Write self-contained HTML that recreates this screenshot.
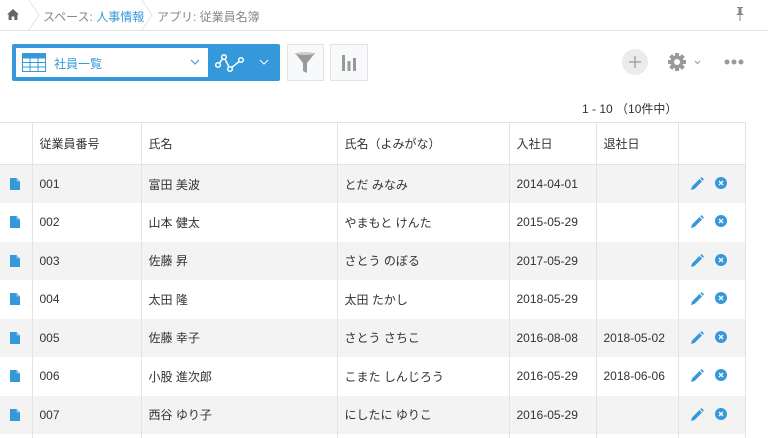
<!DOCTYPE html>
<html style="overflow:hidden;height:438px"><head><meta charset="utf-8"><style>
*{margin:0;padding:0;box-sizing:border-box}
body{width:768px;height:438px;overflow:hidden;background:#fff;font-family:"Liberation Sans","Noto Sans CJK JP",sans-serif;color:#333;font-size:12px;position:relative}
.a{position:absolute}
.bc{top:0;left:0;width:768px;height:31px;border-bottom:1px solid #e3e3e3;color:#888;font-size:12px}
.sep{position:absolute;top:0;width:12px;height:30px}
table{position:absolute;top:122px;left:0;border-collapse:collapse;font-size:12px}
td{border-left:1px solid #e3e3e3;height:38.5px;padding-left:7px;color:#333;white-space:nowrap}
tr.h td{height:42px;border-top:1px solid #e3e3e3;border-bottom:1px solid #e3e3e3}
tr.g td{background:#f3f3f3}
td.i{border-left:none;padding-left:10px}
td.l{border-right:1px solid #e3e3e3}
.vl{position:absolute;top:433px;height:5px;width:1px;background:#e3e3e3}
</style></head><body>
<div class="a bc">
<svg class="a" style="left:7px;top:9px" width="12" height="11" viewBox="0 0 12 11"><path d="M6 0L0 5.5h1.6V11h3V7.5h2.8V11h3V5.5H12z" fill="#666"/></svg>
<svg class="sep" style="left:28px" viewBox="0 0 12 30"><path d="M1 0L11 15L1 30" fill="none" stroke="#e3e3e3"/></svg>
<div class="a" style="left:43px;top:8px">スペース: <span style="color:#3498db">人事情報</span></div>
<svg class="sep" style="left:141px" viewBox="0 0 12 30"><path d="M1 0L11 15L1 30" fill="none" stroke="#e3e3e3"/></svg>
<div class="a" style="left:157px;top:8px">アプリ: 従業員名簿</div>
<svg class="a" style="left:736px;top:7px" width="8" height="14" viewBox="0 0 8 14"><path d="M1 0h6v1H5.5v5L8 8H4.5v6h-1V8H0l2.5-2V1H1z" fill="#888"/></svg>
</div>
<div class="a" style="left:12px;top:44px;width:268px;height:37px;background:#3498db;border-radius:2px"></div>
<div class="a" style="left:16px;top:48px;width:192px;height:29px;background:#fff"></div>
<svg class="a" style="left:22px;top:53px" width="24" height="19" viewBox="0 0 24 19"><rect x="0.5" y="0.5" width="23" height="18" fill="#fff" stroke="#3498db"/><path d="M0 5h24M0 9.5h24M0 14h24M8 5v14M16 5v14" stroke="#3498db"/><rect x="1" y="1" width="22" height="4" fill="#3498db"/></svg>
<div class="a" style="left:54px;top:55px;color:#3498db;font-size:12px">社員一覧</div>
<svg class="a" style="left:190px;top:59px" width="10" height="6" viewBox="0 0 10 6"><path d="M1 1l4 4 4-4" fill="none" stroke="#3498db"/></svg>
<svg class="a" style="left:215px;top:52px" width="32" height="22" viewBox="0 0 32 22"><path d="M3 13L9 5L15 17L26 8" fill="none" stroke="#fff" stroke-width="1.5"/><g fill="#3498db" stroke="#fff" stroke-width="1.5"><circle cx="3" cy="13" r="2.3"/><circle cx="9" cy="5" r="2.3"/><circle cx="15" cy="17" r="2.3"/><circle cx="26" cy="8" r="2.3"/></g></svg>
<svg class="a" style="left:259px;top:59px" width="10" height="6" viewBox="0 0 10 6"><path d="M1 1l4 4 4-4" fill="none" stroke="#fff"/></svg>
<div class="a" style="left:287px;top:44px;width:37px;height:37px;background:#f7f9fa;border:1px solid #e3e3e3"></div>
<svg class="a" style="left:294px;top:51px" width="22" height="23" viewBox="0 0 22 23"><path d="M1 2h20L13 12v10l-4-2v-8z" fill="#999"/><ellipse cx="11" cy="2.5" rx="9" ry="1.5" fill="#ccc"/></svg>
<div class="a" style="left:330px;top:44px;width:38px;height:37px;background:#f7f9fa;border:1px solid #e3e3e3"></div>
<svg class="a" style="left:341px;top:55px" width="16" height="16" viewBox="0 0 16 16"><path d="M1 0h3v16H1zM6.5 6h3v10h-3zM12 3h3v13h-3z" fill="#999"/></svg>
<div class="a" style="left:622px;top:49px;width:26px;height:26px;border-radius:50%;background:#ebebeb"></div>
<svg class="a" style="left:628px;top:55px" width="14" height="14" viewBox="0 0 14 14"><path d="M7 1v12M1 7h12" stroke="#999" stroke-width="1.3"/></svg>
<svg class="a" style="left:667px;top:52px" width="20" height="20" viewBox="0 0 20 20"><g fill="#999"><circle cx="10" cy="10" r="6.5"/><g stroke="#999" stroke-width="4"><path d="M10 1v18M1 10h18M3.6 3.6l12.8 12.8M16.4 3.6L3.6 16.4"/></g></g><circle cx="10" cy="10" r="3" fill="#fff"/></svg>
<svg class="a" style="left:694px;top:60px" width="7" height="5" viewBox="0 0 7 5"><path d="M1 1l2.5 2.5L6 1" fill="none" stroke="#999"/></svg>
<svg class="a" style="left:724px;top:59px" width="20" height="6" viewBox="0 0 20 6"><g fill="#999"><circle cx="3" cy="3" r="2.5"/><circle cx="10" cy="3" r="2.5"/><circle cx="17" cy="3" r="2.5"/></g></svg>
<div class="a" style="left:582px;top:100px;font-size:12px;color:#333">1 - 10 （10件中）</div>
<table>
<colgroup><col style="width:32px"><col style="width:109px"><col style="width:196px"><col style="width:172px"><col style="width:87px"><col style="width:82px"><col style="width:67px"></colgroup>
<tr class="h"><td class="i"></td><td>従業員番号</td><td>氏名</td><td>氏名（よみがな）</td><td>入社日</td><td>退社日</td><td class="l"></td></tr>
<tr class="g"><td class="i">D</td><td>001</td><td>富田 美波</td><td>とだ みなみ</td><td>2014-04-01</td><td></td><td class="l">E</td></tr>
<tr><td class="i">D</td><td>002</td><td>山本 健太</td><td>やまもと けんた</td><td>2015-05-29</td><td></td><td class="l">E</td></tr>
<tr class="g"><td class="i">D</td><td>003</td><td>佐藤 昇</td><td>さとう のぼる</td><td>2017-05-29</td><td></td><td class="l">E</td></tr>
<tr><td class="i">D</td><td>004</td><td>太田 隆</td><td>太田 たかし</td><td>2018-05-29</td><td></td><td class="l">E</td></tr>
<tr class="g"><td class="i">D</td><td>005</td><td>佐藤 幸子</td><td>さとう さちこ</td><td>2016-08-08</td><td>2018-05-02</td><td class="l">E</td></tr>
<tr><td class="i">D</td><td>006</td><td>小股 進次郎</td><td>こまた しんじろう</td><td>2016-05-29</td><td>2018-06-06</td><td class="l">E</td></tr>
<tr class="g"><td class="i">D</td><td>007</td><td>西谷 ゆり子</td><td>にしたに ゆりこ</td><td>2016-05-29</td><td></td><td class="l">E</td></tr>
</table>
<div class="vl" style="left:32px"></div><div class="vl" style="left:141px"></div><div class="vl" style="left:337px"></div><div class="vl" style="left:509px"></div><div class="vl" style="left:596px"></div><div class="vl" style="left:678px"></div><div class="vl" style="left:745px"></div>
<script>
document.querySelectorAll('td.i').forEach(function(t){if(t.textContent=='D')t.innerHTML='<svg width="10" height="12" viewBox="0 0 10 12" style="display:block"><path d="M0 0h6.5L10 3.5V12H0z" fill="#3498db"/><path d="M6.5 0v3.5H10" fill="#8cc4ec"/></svg>'});
document.querySelectorAll('td.l').forEach(function(t){if(t.textContent=='E')t.innerHTML='<svg width="40" height="14" viewBox="0 0 40 14" style="display:block;margin-left:4px"><path d="M1 13l1-3.5L9.5 2l2.5 2.5L4.5 12z M10.3 1.2l1.2-1.2 2.5 2.5-1.2 1.2z" fill="#3498db"/><circle cx="31" cy="6" r="6" fill="#3498db"/><path d="M29 4l4 4M33 4l-4 4" stroke="#fff" stroke-width="1.3"/></svg>'});
</script>
</body></html>
